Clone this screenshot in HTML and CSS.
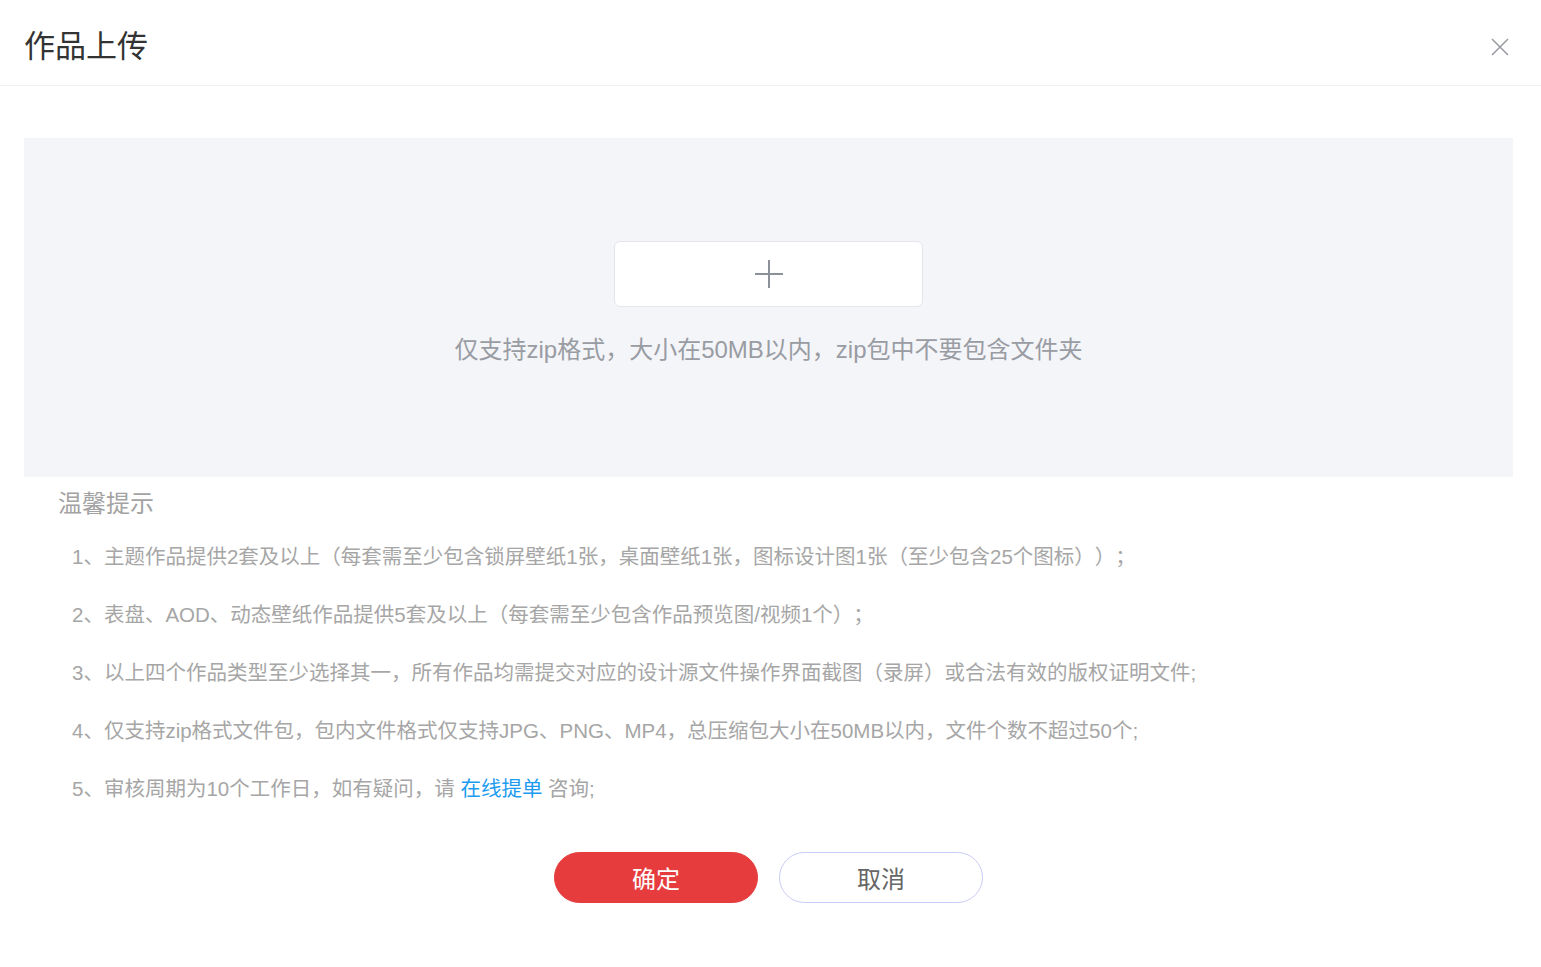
FILE: index.html
```html
<!DOCTYPE html>
<html lang="zh-CN">
<head>
  <meta charset="UTF-8" />
  <meta name="viewport" content="width=device-width, initial-scale=1" />
  <title>作品上传</title>
  <link rel="stylesheet" href="styles.css">
</head>
<body>
  <div class="dialog" role="dialog" aria-label="作品上传">
    <div class="dialog-header">
      <h1 class="dialog-title">作品上传</h1>
      <button class="close-btn" aria-label="关闭">
        <svg width="20" height="20" viewBox="0 0 20 20">
          <path d="M2 2 L18 18 M18 2 L2 18" stroke="#9a9ca3" stroke-width="1.6" fill="none" />
        </svg>
      </button>
    </div>

    <div class="dialog-body">
      <div class="upload-area">
        <div class="upload-box">
          <svg width="30" height="30" viewBox="0 0 30 30">
            <path d="M15 1 V29 M1 15 H29" stroke="#8c9098" stroke-width="2" fill="none" />
          </svg>
        </div>
        <p class="upload-hint">仅支持zip格式，大小在50MB以内，zip包中不要包含文件夹</p>
      </div>

      <div class="tips">
        <h2 class="tips-title">温馨提示</h2>
        <ul class="tips-list">
          <li>1、主题作品提供2套及以上（每套需至少包含锁屏壁纸1张，桌面壁纸1张，图标设计图1张（至少包含25个图标））；</li>
          <li>2、表盘、AOD、动态壁纸作品提供5套及以上（每套需至少包含作品预览图/视频1个）；</li>
          <li>3、以上四个作品类型至少选择其一，所有作品均需提交对应的设计源文件操作界面截图（录屏）或合法有效的版权证明文件;</li>
          <li>4、仅支持zip格式文件包，包内文件格式仅支持JPG、PNG、MP4，总压缩包大小在50MB以内，文件个数不超过50个;</li>
          <li>5、审核周期为10个工作日，如有疑问，请 <a class="link" href="#">在线提单</a> 咨询;</li>
        </ul>
      </div>

      <div class="actions">
        <button class="btn btn-primary">确定</button>
        <button class="btn btn-default">取消</button>
      </div>
    </div>
  </div>
</body>
</html>
```

FILE: styles.css
```css
body {
  margin: 0;
  background: #fff;
  font-family: "Liberation Sans", "Noto Sans CJK SC", sans-serif;
}

.dialog {
  width: 1541px;
  min-height: 967px;
  background: #fff;
}

.dialog-header {
  height: 86px;
  box-sizing: border-box;
  display: flex;
  align-items: center;
  justify-content: space-between;
  padding: 8px 31px 0 24px;
  border-bottom: 1px solid #f0f0f2;
}

.dialog-title {
  margin: 0;
  font-size: 31px;
  font-weight: normal;
  color: #333;
  line-height: 40px;
}

.close-btn {
  border: none;
  background: none;
  padding: 0;
  width: 20px;
  height: 20px;
  cursor: pointer;
}

.dialog-body {
  padding: 52px 28px 0 24px;
}

/* Upload drop area */
.upload-area {
  height: 339px;
  box-sizing: border-box;
  padding-top: 103px;
  background: #f4f5f9;
  display: flex;
  flex-direction: column;
  align-items: center;
}

.upload-box {
  width: 309px;
  height: 66px;
  box-sizing: border-box;
  background: #fff;
  border: 1px solid #e4e6eb;
  border-radius: 6px;
  display: flex;
  align-items: center;
  justify-content: center;
  cursor: pointer;
}

.upload-hint {
  margin: 27px 0 0;
  font-size: 24px;
  line-height: 32px;
  color: #999ca3;
}

/* Tips */
.tips {
  margin-top: 11px;
}

.tips-title {
  margin: 0 0 0 34px;
  font-size: 24px;
  font-weight: normal;
  line-height: 32px;
  color: #a3a3a3;
}

.tips-list {
  list-style: none;
  margin: 8px 0 0;
  padding: 0 0 0 48px;
  text-spacing-trim: space-all;
}

.tips-list li {
  font-size: 20.5px;
  line-height: 58px;
  color: #a6a6a6;
}

.link {
  color: #1d9bf0;
  text-decoration: none;
}

/* Buttons */
.actions {
  margin-top: 34px;
  display: flex;
  justify-content: center;
  gap: 21px;
}

.btn {
  width: 204px;
  height: 51px;
  border-radius: 26px;
  font-family: inherit;
  font-size: 24px;
  cursor: pointer;
}

.btn-primary {
  background: #e63c3e;
  border: 1px solid #e63c3e;
  color: #fff;
}

.btn-default {
  background: #fff;
  border: 1px solid #c9cbf5;
  color: #666;
}
```
